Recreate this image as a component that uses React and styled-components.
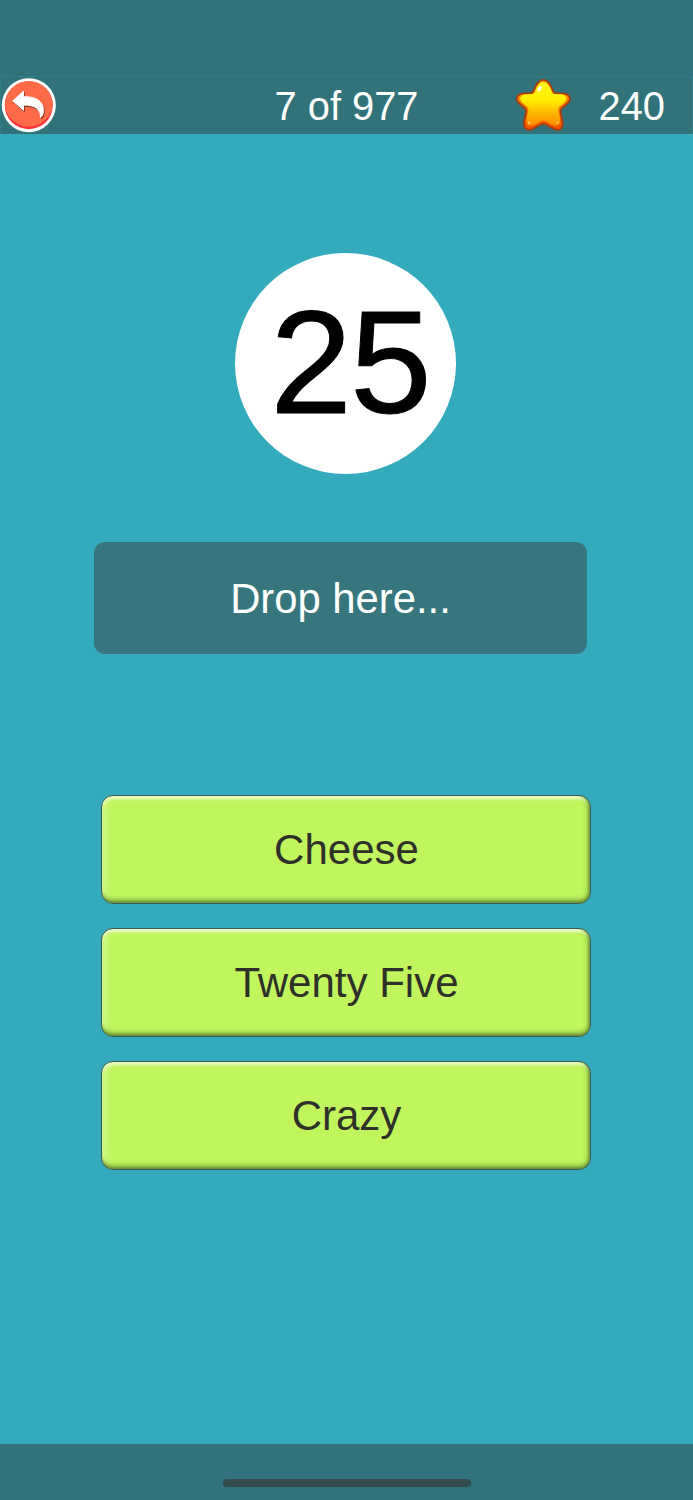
import React from 'react';
import styled, { createGlobalStyle } from 'styled-components';

const GlobalStyle = createGlobalStyle`
  * {
    box-sizing: border-box;
  }
  body {
    background: #34abbd;
    font-family: 'Liberation Sans', Arial, sans-serif;
    margin: 0;
  }
`;

const Screen = styled.div`
  background: #34abbd;
  display: flex;
  flex-direction: column;
  height: 1500px;
  overflow: hidden;
  width: 693px;
`;

const StatusArea = styled.div`
  background: #32727a;
  flex: none;
  height: 76px;
`;

const TopBar = styled.header`
  align-items: center;
  background: #32727a;
  border: 1px solid #2f7f8b;
  border-bottom: 0;
  color: #fff;
  display: grid;
  flex: none;
  font-size: 39.8px;
  grid-template-columns: 1fr auto 1fr;
  height: 58px;
  line-height: 57px;
`;

const Progress = styled.div`
  padding-top: 1px;
`;

const BackButton = styled.button`
  background: none;
  border: 0;
  height: 56px;
  justify-self: start;
  padding: 0;
  width: 56px;
  svg {
    display: block;
  }
`;

const Score = styled.div`
  align-items: center;
  display: flex;
  gap: 28px;
  justify-self: end;
  padding-right: 27px;
  svg {
    display: block;
  }
  span {
    padding-top: 1px;
  }
`;

const Board = styled.main`
  align-items: center;
  display: flex;
  flex: 1;
  flex-direction: column;
  padding-top: 118.5px;
`;

const Card = styled.div`
  background: #fff;
  border-radius: 50%;
  color: #000;
  font-size: 147px;
  height: 221px;
  letter-spacing: -2px;
  line-height: 219px;
  margin-right: 2px;
  padding-left: 9px;
  text-align: center;
  width: 221px;
  -webkit-text-stroke: 1px #000;
`;

const DropZone = styled.div`
  background: #37767e;
  border-radius: 11px;
  color: #fff;
  font-size: 41.8px;
  height: 112.5px;
  line-height: 113px;
  margin: 68px 12px 0 0;
  text-align: center;
  width: 493px;
`;

const Answers = styled.div`
  display: flex;
  flex-direction: column;
  gap: 24px;
  margin: 140.5px 1px 0 0;
`;

const Answer = styled.button`
  background: #c1f55d;
  border: 1px solid #3b5a5a;
  border-radius: 12px;
  box-shadow:
    inset 0 -4px 2px -2px #6d9638,
    inset -3px 0 2px -1px #7ba63c,
    inset 0 4px 3px -1px #ebfccb,
    inset 0 -6px 4px -2px #8dba45,
    inset -6px 0 4px -2px #a7d751,
    inset 7px 0 5px -2px #d2f98a;
  color: #2e312a;
  font-family: inherit;
  font-size: 42px;
  height: 109.3px;
  line-height: 107px;
  padding: 0 0 0 1px;
  text-align: center;
  width: 490px;
`;

const BottomArea = styled.footer`
  background: #32727a;
  display: flex;
  flex: none;
  height: 56px;
  justify-content: center;
  padding-top: 35px;
`;

const HomeIndicator = styled.div`
  background: #344c50;
  border-radius: 4px;
  height: 8px;
  width: 248px;
`;

const arrowPath =
  'M11.8 23.3L22.5 13.7V19.3C34 18.6 43 23.5 42.4 33.5C42.2 36.5 41.2 39 39.4 40.3C40 31.5 34 27.4 22.5 27.6V32.8Z';

function BackIcon() {
  return (
    <svg width="56" height="56" viewBox="0 0.5 56 56">
      <defs>
        <clipPath id="disc">
          <circle cx="27.8" cy="27.7" r="24" />
        </clipPath>
      </defs>
      <circle cx="27.8" cy="27.7" r="27" fill="#fff" />
      <circle cx="27.8" cy="27.7" r="24" fill="#fb3339" />
      <circle
        cx="27.8"
        cy="24.6"
        r="24.4"
        fill="#ff6b48"
        clipPath="url(#disc)"
      />
      <path
        d={arrowPath}
        transform="translate(0.8 1.2)"
        fill="#803126"
        stroke="#803126"
        strokeLinejoin="round"
      />
      <path
        d={arrowPath}
        fill="#fff"
        stroke="#fff"
        strokeLinejoin="round"
      />
    </svg>
  );
}

const starPath =
  'M27.3 2.4C31.8 2.4 34.2 6.2 36.6 12.5C37.5 15 38.6 15.8 41 15.9L47.5 16.2C54.3 16.8 55.9 22 51 26.2L46.2 30.2C44.6 31.6 44.2 33 44.6 35L46.4 43.5C47.8 51 43.4 54.4 37.2 51L30.6 47.2C28.2 46 26.4 46 24 47.2L17.4 51C11.2 54.4 6.8 51 8.2 43.5L10 35C10.4 33 10 31.6 8.4 30.2L3.6 26.2C-1.3 22 0.3 16.8 7.1 16.2L13.6 15.9C16 15.8 17.1 15 18 12.5C20.4 6.2 22.8 2.4 27.3 2.4Z';

function StarIcon() {
  return (
    <svg width="55" height="56" viewBox="0 0.5 55 56">
      <defs>
        <linearGradient id="gold" x1="0" y1="0" x2="0" y2="1">
          <stop offset="0" stopColor="#fff21c" />
          <stop offset="0.4" stopColor="#fff000" />
          <stop offset="0.68" stopColor="#ffbd00" />
          <stop offset="1" stopColor="#ff8a00" />
        </linearGradient>
        <linearGradient id="edge" x1="0" y1="0" x2="0" y2="1">
          <stop offset="0" stopColor="#ffa800" />
          <stop offset="1" stopColor="#f05000" />
        </linearGradient>
      </defs>
      <path d={starPath} fill="url(#edge)" stroke="#ab3d0c" strokeWidth="1.8" />
      <path
        d={starPath}
        fill="url(#gold)"
        transform="translate(27.4 26.6) scale(0.87) translate(-27.4 -27.4)"
      />
      <ellipse
        cx="23.6"
        cy="11.2"
        rx="1.6"
        ry="3"
        fill="#fff"
        transform="rotate(28 23.6 11.2)"
      />
      <circle cx="13" cy="45.2" r="1.2" fill="#ffc35c" />
      <circle cx="41.4" cy="45.2" r="1.2" fill="#ffc35c" />
    </svg>
  );
}

const answers = ['Cheese', 'Twenty Five', 'Crazy'];

function App() {
  return (
    <>
      <GlobalStyle />
      <Screen>
        <StatusArea />
        <TopBar>
          <BackButton aria-label="Back">
            <BackIcon />
          </BackButton>
          <Progress>7 of 977</Progress>
          <Score>
            <StarIcon />
            <span>240</span>
          </Score>
        </TopBar>
        <Board>
          <Card>25</Card>
          <DropZone>Drop here...</DropZone>
          <Answers>
            {answers.map((answer) => (
              <Answer key={answer}>{answer}</Answer>
            ))}
          </Answers>
        </Board>
        <BottomArea>
          <HomeIndicator />
        </BottomArea>
      </Screen>
    </>
  );
}

export default App;
